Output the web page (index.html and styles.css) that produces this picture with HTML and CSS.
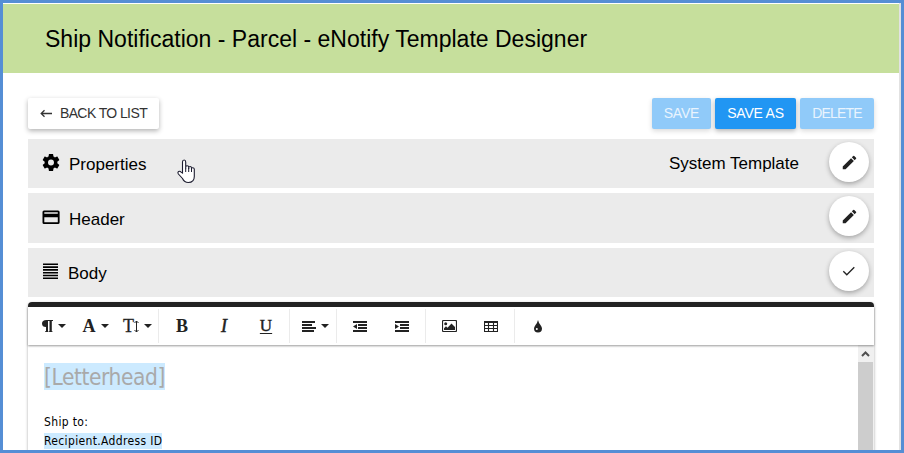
FILE: index.html
```html
<!DOCTYPE html>
<html lang="en">
<head>
<meta charset="utf-8">
<title>eNotify Template Designer</title>
<link rel="stylesheet" href="styles.css">
</head>
<body>
<div class="frame">
  <header class="title-bar"><h1>Ship Notification - Parcel - eNotify Template Designer</h1></header>
  <main class="content">
    <div class="actions">
      <button class="btn back"><svg width="12" height="11" viewBox="0 0 12 11"><path d="M12 5.500H1.200M4.500 2.300L1.200 5.500l3.300 3.200" fill="none" stroke="#333" stroke-width="1.300"/></svg><span class="t-back">BACK TO LIST</span></button>
      <div class="right">
        <button class="btn blue off save"><span>SAVE</span></button>
        <button class="btn blue saveas"><span>SAVE AS</span></button>
        <button class="btn blue off delete"><span>DELETE</span></button>
      </div>
    </div>
    <section class="panel">
      <svg class="picon" width="18" height="17" viewBox="2 2 20 20"><path d="M19.43 12.98c.04-.32.07-.64.07-.98s-.03-.66-.07-.98l2.11-1.65c.19-.15.24-.42.12-.64l-2-3.46c-.12-.22-.39-.3-.61-.22l-2.49 1c-.52-.4-1.08-.73-1.69-.98l-.38-2.65C14.46 2.18 14.25 2 14 2h-4c-.25 0-.46.18-.49.42l-.38 2.65c-.61.25-1.17.59-1.69.98l-2.49-1c-.23-.09-.49 0-.61.22l-2 3.46c-.13.22-.07.49.12.64l2.11 1.65c-.04.32-.07.65-.07.98s.03.66.07.98l-2.11 1.65c-.19.15-.24.42-.12.64l2 3.46c.12.22.39.3.61.22l2.49-1c.52.4 1.08.73 1.69.98l.38 2.65c.03.24.24.42.49.42h4c.25 0 .46-.18.49-.42l.38-2.65c.61-.25 1.17-.59 1.69-.98l2.49 1c.23.09.49 0 .61-.22l2-3.46c.12-.22.07-.49-.12-.64zM12 15.500a3.500 3.500 0 1 1 0-7 3.500 3.500 0 0 1 0 7z"/></svg>
      <span class="label l1">Properties</span>
      <span class="note">System Template</span>
      <button class="round"><svg width="15" height="15" viewBox="2 2 20 20"><path fill="#222" d="M3 17.25V21h3.75L17.81 9.94l-3.75-3.75zM20.71 7.04a1 1 0 0 0 0-1.41l-2.34-2.34a1 1 0 0 0-1.41 0l-1.83 1.83 3.75 3.75z"/></svg></button>
      <svg class="pointer" width="20" height="25" viewBox="0 0 20 25"><path d="M5.5 14V3q0-2 1.6-2t1.6 2v6.5V8q0-1.3 1.5-1.3T11.7 8v2-1.3q0-1.2 1.4-1.2T14.5 9v1.6-.8q0-1.2 1.3-1.1T17.3 10v7.5q0 6-6 6-4 0-5.8-4L1.4 15q-1-1.8.2-2.5 1.4-.8 2.5.7z" fill="#fff" stroke="#1d1d30" stroke-width="1.1"/><path d="M8.7 9v4M11.7 9v4M14.5 10v3" stroke="#1d1d30"/></svg>
    </section>
    <section class="panel tall">
      <svg class="picon" width="18" height="18" viewBox="0 0 18 18"><path fill-rule="evenodd" d="M2 2.500h14q1.600 0 1.600 1.600v10.300q0 1.600-1.600 1.600H2Q.5 16 .5 14.400V4.100Q.5 2.500 2 2.500zM2.300 4.200v1.500h13.500V4.200zM2.300 9.200v5.100h13.500V9.200z"/></svg>
      <span class="label l2">Header</span>
      <button class="round up1"><svg width="15" height="15" viewBox="2 2 20 20"><path fill="#222" d="M3 17.25V21h3.75L17.81 9.94l-3.75-3.75zM20.71 7.04a1 1 0 0 0 0-1.41l-2.34-2.34a1 1 0 0 0-1.41 0l-1.83 1.83 3.75 3.75z"/></svg></button>
    </section>
    <section class="panel last">
      <svg class="picon" width="17" height="18" viewBox="0 0 17 18"><path d="M1 2.300h15M1 5.100h15M1 7.900h15M1 10.700h15M1 13.500h15M1 16.300h15" stroke="#000" stroke-width="1.600"/></svg>
      <span class="label l3">Body</span>
      <button class="round"><svg width="14" height="12" viewBox="0 0 14 12"><path d="M1.300 6.300l3.500 3.500 7.500-7.500" fill="none" stroke="#222" stroke-width="1.300"/></svg></button>
    </section>
    <section class="editor">
      <div class="toolbar">
        <div class="group drops">
          <span class="tool"><svg width="11" height="12" viewBox="0 0 11 12"><path d="M11 0H4.500Q0 0 0 3.500T4 7v4.200H3v.8h3.500v-.8H6V1h1.500v10.200H7v.8h3.500v-.8h-.7V1H11z" fill="#222"/></svg><i class="caret"></i></span>
          <span class="tool"><b class="g">A</b><i class="caret"></i></span>
          <span class="tool"><span class="g th">T<svg width="5" height="13" viewBox="0 0 5 13"><path d="M2.500 1v11M.5 3l2-2 2 2M.5 10l2 2 2-2" stroke="#222" fill="none"/></svg></span><i class="caret"></i></span>
        </div>
        <div class="group">
          <span class="tool"><b class="g">B</b></span>
          <span class="tool"><b class="g it">I</b></span>
          <span class="tool"><span class="g un">U</span></span>
        </div>
        <div class="group drops">
          <span class="tool"><svg width="14" height="11"><path d="M0 1h13M0 4h10M0 7h14M0 10h12" stroke="#222" stroke-width="2"/></svg><i class="caret"></i></span>
        </div>
        <div class="group">
          <span class="tool"><svg width="14" height="11"><path d="M0 1h14M5 4h9M5 7h9M0 10h14" stroke="#222" stroke-width="2"/><path d="M4 3v5L0 5.500z" fill="#222"/></svg></span>
          <span class="tool"><svg width="14" height="11"><path d="M0 1h14M5 4h9M5 7h9M0 10h14" stroke="#222" stroke-width="2"/><path d="M0 3v5l4-2.500z" fill="#222"/></svg></span>
        </div>
        <div class="group">
          <span class="tool"><svg width="15" height="12"><rect x=".5" y=".5" width="14" height="11" rx="1" fill="none" stroke="#222" stroke-width="1.200"/><circle cx="3.700" cy="3.700" r="1.500" fill="#222"/><path d="M2 10V8.200l2-2 1.500 1.500L9.500 3.500 13 7v3z" fill="#222"/></svg></span>
          <span class="tool"><svg width="14" height="11"><path d="M.5 1h13v9.500H.5zM0 4.500h14M0 7.500h14M4.500 1v10M9.500 1v10" fill="none" stroke="#222" stroke-width="1.100"/><path d="M0 1h14" stroke="#222" stroke-width="2"/></svg></span>
        </div>
        <div class="group end">
          <span class="tool"><svg width="10" height="13"><path d="M5 0Q5.500 2.500 7.500 5 9 7 9 8.500A4 4 0 0 1 1 8.500Q1 7 2.500 5 4.500 2.500 5 0z" fill="#222"/><circle cx="3.800" cy="9" r="1" fill="#fff"/></svg></span>
        </div>
      </div>
      <div class="document">
        <div class="page-text">
          <div class="letter"><mark>[Letterhead]</mark></div>
          <div class="ship">Ship to:</div>
          <div class="recipient"><mark>Recipient.Address ID</mark></div>
        </div>
        <div class="scroll"><div class="up"><svg width="9" height="6"><path d="M1 5l3.500-3.500L8 5" fill="none" stroke="#505050" stroke-width="2"/></svg></div><div class="thumb"></div></div>
      </div>
    </section>
  </main>
</div>
</body>
</html>
```
FILE: styles.css
```css
* { box-sizing: border-box; }
body { margin: 0; font-family: "Liberation Sans", Arial, sans-serif; color: #000; }
svg { display: block; flex: none; }
.frame { width: 904px; height: 453px; border: 3px solid #558ed5; overflow: hidden; padding: 1px 2px 0 0; background: linear-gradient(#e2e2e2, #e2e2e2) right / 2px 100% no-repeat #fff; display: flex; flex-direction: column; }
.title-bar { height: 69px; flex: none; background: #c6df9c; padding-left: 42px; display: flex; align-items: center; }
h1 { margin: 0; font-size: 23px; font-weight: 400; line-height: 28px; letter-spacing: .01px; white-space: nowrap; }
.content { width: 846px; margin: 25px 0 0 25px; display: flex; flex-direction: column; }
.actions { height: 31px; flex: none; margin-bottom: 10px; display: flex; justify-content: space-between; }
.right { display: flex; gap: 4px; }
.btn { height: 31px; padding: 0 0 1px; border: 0; border-radius: 2px; font: 14px "Liberation Sans", Arial, sans-serif; display: flex; align-items: center; justify-content: center; white-space: nowrap; box-shadow: 0 2px 5px rgba(0,0,0,.3); }
.btn span { letter-spacing: -.2px; }
.btn .t-back { letter-spacing: -.6px; }
.back { width: 131px; background: #fff; color: #333; gap: 8px; }
.blue { background: #2196f3; color: #fff; }
.off { background: #90caf9; color: #e9f4fe; box-shadow: 0 2px 5px rgba(0,0,0,.15); }
.save { width: 59px; }
.saveas { width: 81px; }
.delete { width: 74px; }
.btn.delete span { letter-spacing: -.8px; }
.panel { height: 49px; flex: none; margin-bottom: 5px; background: #ebebeb; padding: 0 5px 0 14px; display: flex; align-items: center; position: relative; font-size: 17px; }
.panel.tall { height: 50px; }
.picon { margin-bottom: 3px; }
.label { margin-left: 9px; flex: 1; line-height: 20px; padding-top: 2px; }
.l2 { padding-top: 3px; }
.note { margin-right: 30px; }
.round { width: 40px; height: 40px; padding: 0; border: 0; border-radius: 50%; background: #fff; margin-bottom: 3px; display: flex; align-items: center; justify-content: center; box-shadow: 0 2px 5px rgba(0,0,0,.3); }
.up1 { margin-bottom: 4px; }
.pointer { position: absolute; left: 149px; top: 20px; }
.editor { height: 170px; border-top: 5px solid #222; border-radius: 4px 4px 0 0; box-shadow: 0 1px 3px rgba(0,0,0,.35); display: flex; flex-direction: column; }
.toolbar { height: 38px; flex: none; display: flex; align-items: center; background: #fff; box-shadow: 0 1px 2px rgba(0,0,0,.4); position: relative; color: #222; }
.group { display: flex; height: 34px; padding: 0 2px; border-right: 1px solid #ebebeb; }
.group.end { border: 0; }
.tool { width: 42px; display: flex; align-items: center; justify-content: center; }
.drops .tool { gap: 5px; padding-left: 5px; }
.g { font-family: "Liberation Serif", serif; font-size: 18px; line-height: 20px; }
.it { font-style: italic; font-weight: 400; -webkit-text-stroke: .5px #222; }
.th { display: flex; align-items: center; -webkit-text-stroke: .3px #222; }
.un { font-size: 17px; text-decoration: underline; text-underline-offset: 2px; -webkit-text-stroke: .4px #222; }
.caret { border: 4px solid transparent; border-top-color: #222; border-bottom: 0; }
.document { height: 127px; display: flex; justify-content: space-between; background: #fff; font-family: "DejaVu Sans Condensed", "DejaVu Sans", sans-serif; font-stretch: condensed; }
.page-text { padding: 18px 0 0 16px; }
mark { background: #cceaff; color: inherit; display: inline-block; white-space: nowrap; }
.letter { font-size: 22.5px; line-height: 28px; height: 27px; color: #a9a9a9; letter-spacing: -.42px; }
.letter mark { height: 27px; }
.ship { font-size: 12px; line-height: 18px; margin-top: 23px; letter-spacing: .35px; }
.recipient { font-size: 12px; line-height: 16px; margin-top: 2px; letter-spacing: .35px; }
.scroll { width: 16px; padding-right: 1px; background: #f0f0f0; }
.up { height: 17px; display: flex; align-items: center; justify-content: center; }
.thumb { height: 110px; background: #cdcdcd; }
```
